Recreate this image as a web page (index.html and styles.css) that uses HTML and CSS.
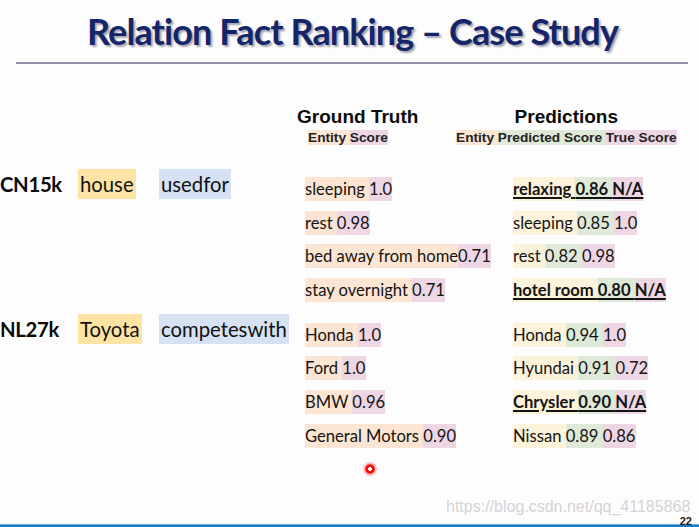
FILE: index.html
```html
<!DOCTYPE html>
<html lang="en">
<head>
<meta charset="utf-8">
<title>Relation Fact Ranking – Case Study</title>
<link rel="stylesheet" href="styles.css">
</head>
<body>
<div class="slide">
  <header class="title-bar">
    <h1 class="title">Relation Fact Ranking – Case Study</h1>
  </header>
  <div class="rule"></div>

  <section class="heads">
    <div class="head head-gt">
      <div class="head-title">Ground Truth</div>
      <div class="head-sub"><span class="bg-ent">Entity </span><span class="bg-true">Score</span></div>
    </div>
    <div class="head head-pred">
      <div class="head-title">Predictions</div>
      <div class="head-sub"><span class="bg-ent">Entity </span><span class="bg-pred">Predicted Score </span><span class="bg-true">True Score</span></div>
    </div>
  </section>

  <section class="group group-1">
    <div class="labels">
      <span class="dataset">CN15k</span>
      <span class="label-cell"><span class="head-ent">house</span></span>
      <span class="label-cell"><span class="rel">usedfor</span></span>
    </div>
    <ul class="list">
      <li class="item"><span class="bg-ent">sleeping </span><span class="bg-true">1.0</span></li>
      <li class="item"><span class="bg-ent">rest </span><span class="bg-true">0.98</span></li>
      <li class="item"><span class="bg-ent">bed away from home</span><span class="bg-true">0.71</span></li>
      <li class="item"><span class="bg-ent">stay overnight </span><span class="bg-true">0.71</span></li>
    </ul>
    <ul class="list">
      <li class="item strong"><span class="bg-pent">relaxing </span><span class="bg-pred">0.86 </span><span class="bg-true">N/A</span></li>
      <li class="item"><span class="bg-pent">sleeping </span><span class="bg-pred">0.85 </span><span class="bg-true">1.0</span></li>
      <li class="item"><span class="bg-pent">rest </span><span class="bg-pred">0.82 </span><span class="bg-true">0.98</span></li>
      <li class="item strong"><span class="bg-pent">hotel room </span><span class="bg-pred">0.80 </span><span class="bg-true">N/A</span></li>
    </ul>
  </section>

  <section class="group group-2">
    <div class="labels">
      <span class="dataset">NL27k</span>
      <span class="label-cell"><span class="head-ent">Toyota</span></span>
      <span class="label-cell"><span class="rel">competeswith</span></span>
    </div>
    <ul class="list">
      <li class="item"><span class="bg-ent">Honda </span><span class="bg-true">1.0</span></li>
      <li class="item"><span class="bg-ent">Ford </span><span class="bg-true">1.0</span></li>
      <li class="item"><span class="bg-ent">BMW </span><span class="bg-true">0.96</span></li>
      <li class="item"><span class="bg-ent">General Motors </span><span class="bg-true">0.90</span></li>
    </ul>
    <ul class="list">
      <li class="item"><span class="bg-pent">Honda </span><span class="bg-pred">0.94 </span><span class="bg-true">1.0</span></li>
      <li class="item"><span class="bg-pent">Hyundai </span><span class="bg-pred">0.91 </span><span class="bg-true">0.72</span></li>
      <li class="item strong"><span class="bg-pent">Chrysler </span><span class="bg-pred">0.90 </span><span class="bg-true">N/A</span></li>
      <li class="item"><span class="bg-pent">Nissan </span><span class="bg-pred">0.89 </span><span class="bg-true">0.86</span></li>
    </ul>
  </section>

  <footer class="footer">
    <span class="page-no">22</span>
  </footer>

  <div class="pointer" aria-hidden="true"></div>
  <div class="watermark">https://blog.csdn.net/qq_41185868</div>
</div>
</body>
</html>
```

FILE: styles.css
```css
* { box-sizing: border-box; }
html, body { margin: 0; padding: 0; }
body {
  background: #fefdfe;
  font-family: "Lato", "Liberation Sans", sans-serif;
  color: #111;
}
.slide {
  position: relative;
  width: 699px;
  height: 527px;
  overflow: hidden;
  display: flex;
  flex-direction: column;
}
.title-bar {
  height: 62px;
  display: flex;
  justify-content: center;
  align-items: flex-start;
}
.title {
  margin: 9px 0 0 0;
  font-family: "Lato", sans-serif;
  font-weight: 700;
  font-size: 36px;
  line-height: 44px;
  color: #15256a;
  letter-spacing: -0.9px;
  text-shadow: 2px 2px 2px rgba(90, 90, 110, 0.55);
  padding-left: 6px;
}
.rule {
  height: 2px;
  margin: 0 11px 0 16px;
  background: #8c8eaa;
}

/* headers */
.heads {
  display: flex;
  margin-top: 42px;
  font-family: "Liberation Sans", Arial, sans-serif;
  font-weight: 700;
}
.head { display: flex; flex-direction: column; }
.head-title { font-size: 19px; line-height: 22px; color: #0c0c0c; }
.head-sub { font-size: 13.7px; line-height: 16px; margin-top: 2px; color: #222; }
.head-gt { margin-left: 297px; width: 159px; }
.head-gt .head-sub { margin-left: 11px; }
.head-pred { align-items: center; }

/* highlight colours */
.bg-ent { background: #fde5d3; }
.bg-pent { background: #fdf2da; }
.bg-pred { background: #dfe9d7; }
.bg-true { background: #eed6e4; }

/* groups */
.group {
  display: grid;
  grid-template-columns: 305px 208px 1fr;
  align-items: start;
}
.group-1 { margin-top: 23px; }
.group-2 { margin-top: 12px; }
.labels {
  display: grid;
  grid-template-columns: 78px 81px auto;
  align-items: center;
  justify-items: start;
  height: 30px;
  font-size: 20.3px;
}
.labels span { line-height: 30px; white-space: nowrap; }
.dataset { font-weight: 700; color: #0a0a0a; letter-spacing: -0.3px; }
.head-ent { display: inline-block; background: #fee4a4; padding: 0 2px; }
.rel { display: inline-block; background: #d6e2f3; padding: 0 2px; }
.list {
  list-style: none;
  margin: 0;
  padding: 8px 0 0 0;
  display: flex;
  flex-direction: column;
  gap: 9.6px;
  font-size: 16.6px;
}
.group-2 .list { padding-top: 9px; }
.item { display: flex; line-height: 24px; white-space: pre; color: #141414; }
.item.strong { font-weight: 700; }
.item.strong span { text-decoration: underline; text-decoration-thickness: 1.5px; text-underline-offset: 2px; }

/* footer */
.footer {
  margin-top: auto;
  height: 3px;
  background: #1a7ec4;
  border-top: 1px solid #5fb0e3;
  position: relative;
}
.page-no {
  position: absolute;
  right: 7px;
  bottom: 0;
  font-family: "Liberation Sans", sans-serif;
  font-weight: 700;
  font-size: 11px;
  line-height: 11px;
  color: #222;
}

/* overlays */
.pointer {
  position: absolute;
  left: 362px;
  top: 461px;
  width: 16px;
  height: 16px;
  border-radius: 50%;
  background: radial-gradient(circle, #fff 0 1.6px, #f50d0d 2.2px 4.3px, rgba(255, 60, 60, 0.45) 5px, rgba(255, 120, 120, 0) 8px);
}
.watermark {
  position: absolute;
  left: 446px;
  top: 498px;
  font-family: "Liberation Sans", Arial, sans-serif;
  font-size: 16px;
  line-height: 18px;
  color: #d4d3d6;
}
```
